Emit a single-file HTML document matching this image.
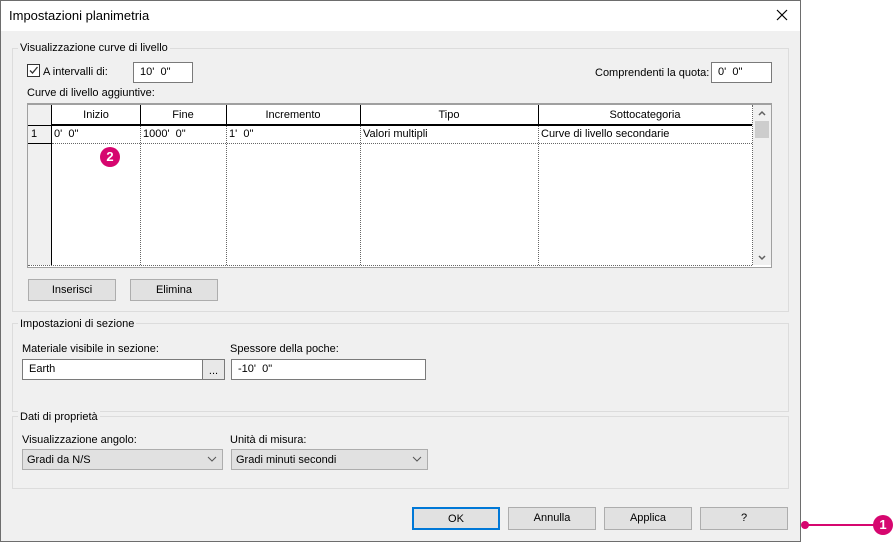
<!DOCTYPE html>
<html><head><meta charset="utf-8"><style>
*{box-sizing:border-box;margin:0;padding:0}
body{width:894px;height:542px;background:#fff;font-family:"Liberation Sans",Arial,sans-serif;font-size:11px;color:#000;position:relative;overflow:hidden}
.a{position:absolute}
.dlg{left:0;top:0;width:801px;height:542px;background:#f0f0f0;box-shadow:inset 0 0 0 1px #6d6d6d}
.title{left:1px;top:1px;width:799px;height:30px;background:#fff}
.grp{border:1px solid #dcdcdc}
.lg{background:#f0f0f0;padding:0 2px;white-space:nowrap}
.inp{background:#fff;border:1px solid #7a7a7a;padding:3px 6px;white-space:nowrap}
.btn{background:#e1e1e1;border:1px solid #adadad;text-align:center;line-height:20px}
.sel{background:#e1e1e1;border:1px solid #adadad;padding:0 4px;line-height:20px}
.t{white-space:nowrap}
.vl{border-left:1px dotted #666;width:0}
.hl{border-top:1px dotted #666;height:0}
</style></head><body>
<div class="a dlg">
<div class="a title"></div>
<div class="a t" style="left:9px;top:8px;font-size:13px">Impostazioni planimetria</div>
<svg class="a" style="left:776px;top:9px" width="12" height="12"><path d="M1 1L11 11M11 1L1 11" stroke="#000" stroke-width="1.2"/></svg>

<div class="a grp" style="left:12px;top:48px;width:777px;height:264px"></div>
<div class="a lg" style="left:18px;top:42px">Visualizzazione curve di livello</div>
<div class="a" style="left:27px;top:64px;width:13px;height:13px;border:1px solid #333;background:#fff"></div>
<svg class="a" style="left:28px;top:65px" width="11" height="11"><path d="M2 5.5L4.5 8L9.5 2" stroke="#333" stroke-width="1.3" fill="none"/></svg>
<div class="a t" style="left:43px;top:66px">A intervalli di:</div>
<div class="a inp" style="left:133px;top:62px;width:60px;height:21px">10'&nbsp; 0"</div>
<div class="a t" style="left:595px;top:67px">Comprendenti la quota:</div>
<div class="a inp" style="left:711px;top:62px;width:61px;height:21px">0'&nbsp; 0"</div>
<div class="a t" style="left:27px;top:87px">Curve di livello aggiuntive:</div>

<div class="a" style="left:27px;top:103px;width:745px;height:165px;border:1px solid #a0a0a0;border-top:2px solid #a0a0a0;background:#fff"></div>
<div class="a" style="left:28px;top:105px;width:24px;height:160px;background:#f0f0f0;border-right:1px solid #000"></div>
<div class="a" style="left:52px;top:105px;width:700px;height:20px;border-bottom:1px solid #000"></div>
<div class="a" style="left:28px;top:125px;width:724px;height:0;border-top:1px solid #000"></div>
<div class="a" style="left:28px;top:143px;width:24px;height:0;border-top:1px solid #000"></div>
<div class="a hl" style="left:52px;top:143px;width:700px"></div>
<div class="a hl" style="left:28px;top:265px;width:724px"></div>
<div class="a" style="left:140px;top:105px;height:20px;border-left:1px solid #000"></div>
<div class="a" style="left:226px;top:105px;height:20px;border-left:1px solid #000"></div>
<div class="a" style="left:360px;top:105px;height:20px;border-left:1px solid #000"></div>
<div class="a" style="left:538px;top:105px;height:20px;border-left:1px solid #000"></div>
<div class="a vl" style="left:140px;top:126px;height:139px"></div>
<div class="a vl" style="left:226px;top:126px;height:139px"></div>
<div class="a vl" style="left:360px;top:126px;height:139px"></div>
<div class="a vl" style="left:538px;top:126px;height:139px"></div>
<div class="a vl" style="left:752px;top:105px;height:160px"></div>
<div class="a t" style="left:52px;width:88px;top:109px;text-align:center">Inizio</div>
<div class="a t" style="left:140px;width:86px;top:109px;text-align:center">Fine</div>
<div class="a t" style="left:226px;width:134px;top:109px;text-align:center">Incremento</div>
<div class="a t" style="left:360px;width:178px;top:109px;text-align:center">Tipo</div>
<div class="a t" style="left:538px;width:214px;top:109px;text-align:center">Sottocategoria</div>
<div class="a t" style="left:31px;top:128px">1</div>
<div class="a t" style="left:54px;top:128px">0'&nbsp; 0"</div>
<div class="a t" style="left:143px;top:128px">1000'&nbsp; 0"</div>
<div class="a t" style="left:229px;top:128px">1'&nbsp; 0"</div>
<div class="a t" style="left:363px;top:128px">Valori multipli</div>
<div class="a t" style="left:541px;top:128px">Curve di livello secondarie</div>
<div class="a" style="left:753px;top:105px;width:18px;height:160px;background:#f0f0f0"></div>
<div class="a" style="left:755px;top:121px;width:14px;height:17px;background:#cdcdcd"></div>
<svg class="a" style="left:758px;top:110px" width="8" height="6"><path d="M1 5L4 2L7 5" stroke="#606060" stroke-width="1.5" fill="none"/></svg>
<svg class="a" style="left:758px;top:255px" width="8" height="6"><path d="M1 1L4 4L7 1" stroke="#606060" stroke-width="1.5" fill="none"/></svg>
<div class="a" style="left:100px;top:147px;width:20px;height:20px;border-radius:50%;background:#d6066f;color:#fff;font-weight:bold;font-size:13px;text-align:center;line-height:20px">2</div>

<div class="a btn" style="left:28px;top:279px;width:88px;height:22px">Inserisci</div>
<div class="a btn" style="left:130px;top:279px;width:88px;height:22px">Elimina</div>

<div class="a grp" style="left:12px;top:323px;width:777px;height:89px"></div>
<div class="a lg" style="left:18px;top:318px">Impostazioni di sezione</div>
<div class="a t" style="left:22px;top:343px">Materiale visibile in sezione:</div>
<div class="a inp" style="left:22px;top:359px;width:181px;height:21px">Earth</div>
<div class="a" style="left:202px;top:359px;width:23px;height:21px;border:1px solid #7a7a7a;background:#e8e8e8;text-align:center;line-height:22px">...</div>
<div class="a t" style="left:230px;top:343px">Spessore della poche:</div>
<div class="a inp" style="left:231px;top:359px;width:195px;height:21px">-10'&nbsp; 0"</div>

<div class="a grp" style="left:12px;top:416px;width:777px;height:73px"></div>
<div class="a lg" style="left:18px;top:411px">Dati di proprietà</div>
<div class="a t" style="left:22px;top:434px">Visualizzazione angolo:</div>
<div class="a sel" style="left:22px;top:449px;width:201px;height:21px">Gradi da N/S</div>
<svg class="a" style="left:207px;top:456px" width="10" height="6"><path d="M1 1L5 5L9 1" stroke="#555" fill="none"/></svg>
<div class="a t" style="left:230px;top:434px">Unità di misura:</div>
<div class="a sel" style="left:231px;top:449px;width:197px;height:21px">Gradi minuti secondi</div>
<svg class="a" style="left:412px;top:456px" width="10" height="6"><path d="M1 1L5 5L9 1" stroke="#555" fill="none"/></svg>

<div class="a btn" style="left:412px;top:507px;width:88px;height:23px;border:2px solid #0078d7">OK</div>
<div class="a btn" style="left:508px;top:507px;width:88px;height:23px">Annulla</div>
<div class="a btn" style="left:604px;top:507px;width:88px;height:23px">Applica</div>
<div class="a btn" style="left:700px;top:507px;width:88px;height:23px">?</div>
</div>
<div class="a" style="left:804px;top:524px;width:70px;height:2px;background:#d6066f"></div>
<div class="a" style="left:801px;top:521px;width:8px;height:8px;border-radius:50%;background:#d6066f"></div>
<div class="a" style="left:873px;top:515px;width:20px;height:20px;border-radius:50%;background:#d6066f;color:#fff;font-weight:bold;font-size:13px;text-align:center;line-height:20px">1</div>
</body></html>
